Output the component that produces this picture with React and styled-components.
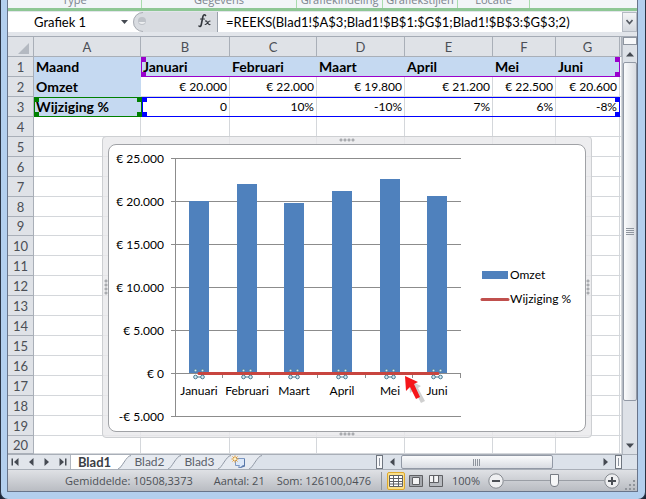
import { useState } from 'react';
import styled, { createGlobalStyle } from 'styled-components';

const GlobalStyle = createGlobalStyle`
  * {
    box-sizing: border-box;
  }

  body {
    margin: 0;
    background-color: #1d2638;
    font-family: Lato, 'Liberation Sans', sans-serif;
    font-size: 13px;
    color: #000000;
  }

  button,
  input {
    margin: 0;
    padding: 0;
    border: none;
    outline: none;
    background: none;
    font: inherit;
    color: inherit;
  }
`;

const columns = [
  { name: 'A', width: 107 },
  { name: 'B', width: 89 },
  { name: 'C', width: 87 },
  { name: 'D', width: 88 },
  { name: 'E', width: 88 },
  { name: 'F', width: 63 },
  { name: 'G', width: 64 },
];

const rows = [
  ['Maand', 'Januari', 'Februari', 'Maart', 'April', 'Mei', 'Juni'],
  ['Omzet', '€ 20.000', '€ 22.000', '€ 19.800', '€ 21.200', '€ 22.500', '€ 20.600'],
  ['Wijziging %', '0', '10%', '-10%', '7%', '6%', '-8%'],
];

const rowHeights = [20, 20, 20, 20, 20, 20, 20, 20, 19, 20, 20, 20, 20, 20, 20, 20, 20, 20, 20, 18];

const months = rows[0].slice(1);
const revenue = [20000, 22000, 19800, 21200, 22500, 20600];

const groups = [
  { name: 'Type', width: 134 },
  { name: 'Gegevens', width: 155 },
  { name: 'Grafiekindeling', width: 86 },
  { name: 'Grafiekstijlen', width: 75 },
  { name: 'Locatie', width: 72 },
];

const Window = styled.main`
  padding: 0 7px 7px 6px;
  background-color: #b3cfee;
  border: 1px solid #2a3344;
  border-top: none;
  border-radius: 0 0 8px 8px;
  overflow: hidden;
`;

const Content = styled.div`
  border: 1px solid #68748a;
  border-top: none;
  background-color: #e4e8ed;
`;

const Ribbon = styled.div`
  display: flex;
  height: 11px;
  overflow: hidden;
  background-color: #f2f5f8;
  border-bottom: 3px solid #8ec795;
`;

const Group = styled.div`
  flex: none;
  display: flex;
  align-items: flex-end;
  justify-content: center;
  width: ${({ $width }) => $width}px;
  height: 8px;
  border-right: 1px solid #a9dcae;
  font-family: 'Open Sans', sans-serif;
  font-size: 11px;
  line-height: 16px;
  color: #7b838d;
  white-space: nowrap;
`;

const FormulaBar = styled.div`
  display: flex;
  height: 26px;
  padding: 1px 0 4px;
  background-color: #e2e5ea;
  border-bottom: 1px solid #a5abb5;

  .name {
    width: 107px;
    padding-left: 26px;
    background-color: #ffffff;
  }

  .drop {
    display: flex;
    align-items: center;
    justify-content: center;
    width: 18px;
    background-color: #ffffff;
  }

  .formula {
    flex: 1;
    min-width: 0;
    padding-left: 8px;
    background-color: #ffffff;
    border-left: 1px solid #9aa1ab;
  }

  .expand {
    display: flex;
    align-items: center;
    justify-content: center;
    width: 15px;
    background: linear-gradient(#f3f4f6, #d5d9df);
    border: 1px solid #b5bac3;
  }
`;

const FunctionArea = styled.div`
  display: flex;
  align-items: center;
  justify-content: space-between;
  width: 84px;
  padding-right: 6px;
  background-color: #d9dce1;
`;

const Workspace = styled.div`
  display: flex;
`;

const Sheet = styled.div`
  position: relative;
  flex: 1;
  min-width: 0;
  overflow: hidden;
  background-color: #ffffff;
`;

const Grid = styled.table`
  width: 100%;
  table-layout: fixed;
  border-collapse: separate;
  border-spacing: 0;
  line-height: 16px;

  th,
  td {
    padding: 0;
    overflow: hidden;
    white-space: nowrap;
    border-right: 1px solid #d4d7db;
    border-bottom: 1px solid #d4d7db;
  }
`;

const HeadCell = styled.th`
  height: 20px;
  font-weight: normal;
  color: #4b4f56;
  text-align: center;
  background-color: #dfe2e7;
  &&& {
    border-color: #a9afb8;
  }

  svg {
    display: block;
    margin: 4px 0 0 10px;
  }
`;

const RowHead = styled(HeadCell)`
  height: auto;
`;

const Row = styled.tr`
  height: ${({ $height }) => $height}px;
`;

const Cell = styled.td`
  text-align: ${({ $text }) => ($text ? 'left' : 'right')};
  font-size: ${({ $text }) => ($text ? 14 : 12)}px;
  font-weight: ${({ $text }) => ($text ? 'bold' : 'normal')};
  background-color: ${({ $filled }) => ($filled ? '#c5d9f1' : '#ffffff')};
  &&& {
    padding: 0 2px;
    ${({ $filled }) => $filled && 'border-color: #c5d9f1;'}
  }
`;

const Range = styled.div`
  position: absolute;
  left: ${({ $left }) => $left}px;
  top: ${({ $top }) => $top}px;
  width: ${({ $width }) => $width}px;
  height: 20px;
  border: 1px solid ${({ $color }) => $color};
  ${({ $open }) => $open && 'border-top-color: transparent;'}

  i {
    position: absolute;
    width: 5px;
    height: 5px;
    background-color: ${({ $color }) => $color};
  }

  i:nth-child(odd) {
    left: -1px;
  }

  i:nth-child(even) {
    right: -1px;
  }

  i:nth-child(-n + 2) {
    top: -1px;
  }

  i:nth-child(n + 3) {
    bottom: -1px;
  }
`;

const ChartFrame = styled.figure`
  position: absolute;
  left: 94px;
  top: 99px;
  margin: 0;
  padding: 7px 5px 5px;
  background-color: rgba(232, 233, 235, 0.8);
  border: 1px solid #cdcfd2;
  border-radius: 4px;

  > svg {
    display: block;
  }
`;

const ChartArea = styled.svg`
  background-color: #ffffff;
  border: 1px solid #a0a2a6;
  border-radius: 8px;
  font-size: 12px;
  overflow: hidden;
`;

const Grip = styled.span`
  position: absolute;
  ${({ $side }) => $side}: 1px;
  ${({ $side }) =>
    $side === 'top' || $side === 'bottom'
      ? 'left: 50%; margin-left: -8px; width: 16px; height: 4px;'
      : 'top: 50%; margin-top: -8px; width: 4px; height: 16px;'}
  background: radial-gradient(#a9abaf 1px, transparent 2px) 0 0 / 4px 4px;
`;

const VerticalBar = styled.div`
  flex: none;
  display: flex;
  flex-direction: column;
  width: 15px;
  background-color: #dde1e7;
  border-left: 1px solid #b4bac3;

  .split {
    height: 8px;
    background-color: #f7f8fa;
    border: 1px solid #8d949f;
  }

  .thumb {
    flex: 1;
    display: flex;
    align-items: center;
    justify-content: center;
    margin-bottom: 36px;
    background: linear-gradient(90deg, #fafbfc, #d9dce2);
    border: 1px solid #9299a5;
    border-radius: 2px;
  }
`;

const ScrollButton = styled.button`
  flex: none;
  display: flex;
  align-items: center;
  justify-content: center;
  width: ${({ $wide }) => $wide || 14}px;
  height: ${({ $tall }) => $tall || 14}px;
`;

const TabStrip = styled.div`
  display: flex;
  height: 16px;
  background-color: #dce2ea;
  border-top: 1px solid #a9afb8;
  border-bottom: 1px solid #a9afb8;
`;

const SheetNav = styled.div`
  display: flex;
  justify-content: space-around;
  width: 63px;
  background-color: #e1e5eb;
  border-right: 1px solid #b0b6bf;
`;

const Tab = styled.button`
  width: ${({ $active }) => ($active ? 47 : 37)}px;
  font-size: ${({ $active }) => ($active ? 13 : 12)}px;
  line-height: 14px;
  font-weight: ${({ $active }) => ($active ? 'bold' : 'normal')};
  color: ${({ $active }) => ($active ? '#3a3e45' : '#5a6069')};
  background-color: ${({ $active }) => ($active ? '#ffffff' : '#e6eaf0')};
  white-space: nowrap;
`;

const NewTab = styled.button`
  width: 18px;
  background-color: #e6eaf0;

  svg {
    display: block;
  }
`;

const HorizontalBar = styled.div`
  display: flex;
  width: 261px;
  margin-left: auto;

  .split {
    width: 7px;
    padding: 2px;
    background-color: #f7f8fa;
    border: 1px solid #6f7680;
  }

  .split::after {
    content: '';
    display: block;
    width: 1px;
    height: 8px;
    margin: auto;
    background-color: #8d949f;
  }

  .thumb {
    display: flex;
    align-items: center;
    justify-content: center;
    width: 152px;
    margin-right: auto;
    background: linear-gradient(#fafbfc, #d9dce2);
    border: 1px solid #9299a5;
    border-radius: 2px;
  }

  .corner {
    width: 15px;
  }
`;

const StatusBar = styled.footer`
  display: flex;
  align-items: center;
  justify-content: flex-end;
  height: 21px;
  background: linear-gradient(#dfe1e5, #b9bcc2);
  font-family: 'Open Sans', sans-serif;
  font-size: 11px;
  line-height: 16px;
  color: #4c5056;
`;

const Stat = styled.span`
  margin-right: ${({ $gap }) => $gap}px;
  white-space: nowrap;
`;

const ViewButton = styled.button`
  display: flex;
  align-items: center;
  justify-content: center;
  width: 18px;
  height: 18px;
  border-radius: 2px;
  background-color: ${({ $active }) => ($active ? '#fbe08a' : 'transparent')};
  border: 1px solid ${({ $active }) => ($active ? '#dfa92c' : 'transparent')};
`;

const Views = styled.div`
  display: flex;
  gap: 2px;
  padding-left: 5px;
  border-left: 1px solid #8e939b;
`;

const Zoom = styled.div`
  display: flex;
  align-items: center;
  margin-left: 7px;

  button {
    display: flex;
    width: 16px;
    height: 16px;
  }

  .level {
    width: 35px;
    margin-right: 1px;
  }

  input {
    appearance: none;
    width: 100px;
    height: 16px;
    background: linear-gradient(#9a9ea5, #9a9ea5) center / 100% 1px no-repeat;
  }

  input::-webkit-slider-thumb {
    appearance: none;
    width: 9px;
    height: 13px;
    background-color: #f6f7f8;
    border: 1px solid #777c84;
    border-radius: 1px 1px 5px 5px;
  }
`;

const ResizeGrip = styled.svg`
  margin-left: 5px;
  align-self: flex-end;
`;

const Arrow = ({ dir, bar }) => {
  const turn = { up: 0, right: 90, down: 180, left: 270 }[dir];
  return (
    <svg width="10" height="10" viewBox="0 0 10 10" aria-hidden="true">
      <g transform={`rotate(${turn} 5 5)`} fill="#454a52">
        <path d="M1 7.5L5 3l4 4.5z" />
        {bar && <path d="M1.5 0.5h7V2h-7z" />}
      </g>
    </svg>
  );
};

const Slant = ({ left, right }) => (
  <svg width="13" height="14" viewBox="0 0 13 14" aria-hidden="true">
    <path d="M0 0h13L0 14z" fill={left} />
    <path d="M13 0v14H0z" fill={right} />
    <path d="M0 14C4 13 8 1 13 0.5" fill="none" stroke="#929aa6" />
  </svg>
);

const Selection = props => (
  <Range {...props}>
    <i />
    <i />
    <i />
    <i />
  </Range>
);

const plot = { left: 66, right: 352, top: 13, step: 43, zero: 228 };
const slot = (plot.right - plot.left) / months.length;

const Chart = () => (
  <ChartFrame aria-label="Grafiek 1">
    <ChartArea width="478" height="288" viewBox="0 0 476 286">
      {['€ 25.000', '€ 20.000', '€ 15.000', '€ 10.000', '€ 5.000', '€ 0', '-€ 5.000'].map(
        (label, i) => {
          const y = plot.top + i * plot.step;
          return (
            <g key={label}>
              <path d={`M${plot.left - 4} ${y + 0.5}H${plot.right}`} stroke="#8c8c8c" />
              <text x="55" y={y + 5} textAnchor="end">
                {label}
              </text>
            </g>
          );
        }
      )}
      <path d="M66.5 13V271" stroke="#8c8c8c" />
      {months.map((month, i) => {
        const middle = Math.round(plot.left + slot * (i + 0.5));
        const height = Math.round((revenue[i] / 5000) * plot.step);
        const tick = Math.round(plot.left + slot * (i + 1)) - 0.5;
        return (
          <g key={month}>
            <rect x={middle - 10} y={plot.zero - height} width="20" height={height} fill="#4f81bd" />
            <path d={`M${tick} 228v5`} stroke="#8c8c8c" />
            <text x={middle} y="250" textAnchor="middle">
              {month}
            </text>
          </g>
        );
      })}
      <path d="M90 228.5H329" stroke="#c8453f" strokeWidth="3" strokeLinecap="round" />
      {months.map((month, i) => {
        const middle = Math.round(plot.left + slot * (i + 0.5));
        return (
          <g key={month} fill="#d8ecf4" stroke="#47788f">
            <circle cx={middle - 3.5} cy="225.5" r="1.3" strokeWidth="0.7" />
            <circle cx={middle + 3.5} cy="225.5" r="1.3" strokeWidth="0.7" />
            <path d={`M${middle - 3} 232h6`} />
            <circle cx={middle - 3.5} cy="232" r="1.8" />
            <circle cx={middle + 3.5} cy="232" r="1.8" />
          </g>
        );
      })}
      <rect x="373" y="126" width="26" height="8" fill="#4f81bd" />
      <text x="401" y="134">
        Omzet
      </text>
      <path d="M373 154.5h26" stroke="#c0504d" strokeWidth="3" strokeLinecap="round" />
      <text x="401" y="158">
        Wijziging %
      </text>
      <path d="M300 235l12 6-3 2 7 13-4 2-7-13-4 3z" fill="#777777" opacity="0.35" />
      <path d="M296 231l13 6-4 2 6 13-4 2-6-12-4 4z" fill="#f5161a" />
    </ChartArea>
    <Grip $side="top" />
    <Grip $side="right" />
    <Grip $side="bottom" />
    <Grip $side="left" />
  </ChartFrame>
);

const App = () => {
  const [name, setName] = useState('Grafiek 1');
  const [formula, setFormula] = useState('=REEKS(Blad1!$A$3;Blad1!$B$1:$G$1;Blad1!$B$3:$G$3;2)');
  const [zoom, setZoom] = useState(100);

  return (
    <>
      <GlobalStyle />
      <Window>
        <Content>
          <Ribbon>
            {groups.map(group => (
              <Group key={group.name} $width={group.width}>
                {group.name}
              </Group>
            ))}
          </Ribbon>

          <FormulaBar>
            <input
              className="name"
              aria-label="Naamvak"
              value={name}
              onChange={e => setName(e.target.value)}
            />
            <button className="drop" aria-label="Namen">
              <svg width="7" height="4" viewBox="0 0 7 4">
                <path d="M0 0h7L3.5 4z" fill="#454a52" />
              </svg>
            </button>
            <FunctionArea>
              <svg width="16" height="20" viewBox="0 0 16 20" aria-hidden="true">
                <path d="M0 0h10A10 10 0 0 0 10 20H0z" fill="#ffffff" />
                <path d="M10 0.5A9.5 9.5 0 0 0 10 19.5" fill="none" stroke="#a9adb4" />
                <circle cx="9" cy="9" r="4" fill="#bfc3c9" />
                <path d="M5.5 10a4 4 0 0 0 7 0z" fill="#eceef0" />
              </svg>
              <button aria-label="Functie invoegen">
                <svg width="13" height="15" viewBox="0 0 13 15">
                  <g fill="none" stroke="#32363c" strokeLinecap="round">
                    <path
                      d="M7.5 2.5C6.5 1 5.2 1.8 4.8 4L3.3 11.5C3 13.3 2 14 1 13"
                      strokeWidth="1.6"
                    />
                    <path
                      d="M2.5 6h4M7.5 8c1.8-1 2 4.5 4.5 3.5M12 8c-1.8 0-2.8 3.7-4.8 3.5"
                      strokeWidth="1.2"
                    />
                  </g>
                </svg>
              </button>
            </FunctionArea>
            <input
              className="formula"
              aria-label="Formulebalk"
              value={formula}
              onChange={e => setFormula(e.target.value)}
            />
            <button className="expand" aria-label="Formulebalk uitvouwen">
              <svg width="7" height="6" viewBox="0 0 7 6">
                <path d="M0.5 1l3 3.5 3-3.5" fill="none" stroke="#555a62" strokeWidth="1.6" />
              </svg>
            </button>
          </FormulaBar>

          <Workspace>
            <Sheet>
              <Grid>
                <colgroup>
                  <col style={{ width: 26 }} />
                  {columns.map(column => (
                    <col key={column.name} style={{ width: column.width }} />
                  ))}
                  <col />
                </colgroup>
                <thead>
                  <tr>
                    <HeadCell aria-label="Alles selecteren">
                      <svg width="11" height="11" viewBox="0 0 11 11">
                        <path d="M11 0v11H0z" fill="#b4b9c1" />
                      </svg>
                    </HeadCell>
                    {columns.map(column => (
                      <HeadCell key={column.name} scope="col">
                        {column.name}
                      </HeadCell>
                    ))}
                    <HeadCell />
                  </tr>
                </thead>
                <tbody>
                  {rowHeights.map((height, i) => (
                    <Row key={i} $height={height}>
                      <RowHead scope="row">{i + 1}</RowHead>
                      {columns.map((column, j) => (
                        <Cell
                          key={column.name}
                          $text={i === 0 || j === 0}
                          $filled={i === 0 || (j === 0 && i < 3)}
                        >
                          {rows[i]?.[j]}
                        </Cell>
                      ))}
                      <td />
                    </Row>
                  ))}
                </tbody>
              </Grid>
              <Selection $left={133} $top={20} $width={479} $color="#9a00cd" $open />
              <Selection $left={134} $top={60} $width={478} $color="#0000ff" />
              <Selection $left={26} $top={60} $width={108} $color="#008000" />
              <Chart />
            </Sheet>
            <VerticalBar>
              <div className="split" />
              <ScrollButton aria-label="Omhoog" $tall={17}>
                <Arrow dir="up" />
              </ScrollButton>
              <div className="thumb">
                <svg width="8" height="7" viewBox="0 0 8 7">
                  <path d="M0 0.5h8M0 2.5h8M0 4.5h8M0 6.5h8" stroke="#8f959e" />
                </svg>
              </div>
              <ScrollButton aria-label="Omlaag" $tall={17}>
                <Arrow dir="down" />
              </ScrollButton>
            </VerticalBar>
          </Workspace>

          <TabStrip>
            <SheetNav>
              <ScrollButton aria-label="Eerste blad">
                <Arrow dir="left" bar />
              </ScrollButton>
              <ScrollButton aria-label="Vorig blad">
                <Arrow dir="left" />
              </ScrollButton>
              <ScrollButton aria-label="Volgend blad">
                <Arrow dir="right" />
              </ScrollButton>
              <ScrollButton aria-label="Laatste blad">
                <Arrow dir="right" bar />
              </ScrollButton>
            </SheetNav>
            <Tab $active>Blad1</Tab>
            <Slant left="#ffffff" right="#e6eaf0" />
            <Tab>Blad2</Tab>
            <Slant left="#e6eaf0" right="#e6eaf0" />
            <Tab>Blad3</Tab>
            <Slant left="#e6eaf0" right="#e6eaf0" />
            <NewTab aria-label="Blad invoegen">
              <svg width="18" height="14" viewBox="0 0 18 14">
                <path d="M4.5 3.5h9v7h-2l-1 2h-3l1-2h-4z" fill="#dce8f8" stroke="#7d98c4" />
                <path d="M8 12.5l5-2v-7l1 1v7l-3 1z" fill="#5877a8" />
                <path d="M4 0.5v7M0.5 4h7M1.5 1.5l5 5M6.5 1.5l-5 5" stroke="#e49a2c" />
                <circle cx="4" cy="4" r="1.3" fill="#fff3c4" />
              </svg>
            </NewTab>
            <Slant left="#e6eaf0" right="#dce2ea" />
            <HorizontalBar>
              <div className="split" />
              <ScrollButton aria-label="Naar links" $wide={18}>
                <Arrow dir="left" />
              </ScrollButton>
              <div className="thumb">
                <svg width="8" height="7" viewBox="0 0 8 7">
                  <path d="M0.5 0v7M2.5 0v7M4.5 0v7M6.5 0v7" stroke="#8f959e" />
                </svg>
              </div>
              <ScrollButton aria-label="Naar rechts" $wide={18}>
                <Arrow dir="right" />
              </ScrollButton>
              <div className="split" />
              <div className="corner" />
            </HorizontalBar>
          </TabStrip>

          <StatusBar>
            <Stat $gap={21}>Gemiddelde: 10508,3373</Stat>
            <Stat $gap={12}>Aantal: 21</Stat>
            <Stat $gap={10}>Som: 126100,0476</Stat>
            <Views>
              <ViewButton $active aria-label="Normaal">
                <svg width="14" height="12" viewBox="0 0 14 12">
                  <path
                    d="M0.5 0.5h13v11h-13zM0.5 3.5h13M0.5 6.5h13M0.5 9h13M4.5 0.5v11M9.5 0.5v11"
                    fill="#ffffff"
                    stroke="#5f6064"
                  />
                </svg>
              </ViewButton>
              <ViewButton aria-label="Pagina-indeling">
                <svg width="14" height="12" viewBox="0 0 14 12">
                  <path d="M0.5 0.5h13v11h-13z" fill="#a5a8ad" stroke="#5f6064" />
                  <path d="M3.5 2.5h7v7h-7z" fill="#f4f4f5" stroke="#5f6064" />
                </svg>
              </ViewButton>
              <ViewButton aria-label="Pagina-eindevoorbeeld">
                <svg width="14" height="12" viewBox="0 0 14 12">
                  <path d="M0.5 0.5h13v11h-13z" fill="#b7babf" stroke="#5f6064" />
                  <path d="M1 1h3v6H1zM5.5 1H9v6H5.5z" fill="#f4f4f5" />
                  <path d="M1 7.5h8.5V1M4.5 1v6" fill="none" stroke="#5f6064" />
                </svg>
              </ViewButton>
            </Views>
            <Zoom>
              <button className="level">{zoom}%</button>
              <button aria-label="Uitzoomen" onClick={() => setZoom(zoom - 10)}>
                <svg width="16" height="16" viewBox="0 0 16 16">
                  <circle cx="8" cy="8" r="7.2" fill="#eeeff1" stroke="#85898f" />
                  <path d="M4 8h8" stroke="#4c5056" strokeWidth="2" />
                </svg>
              </button>
              <input
                type="range"
                aria-label="In- en uitzoomen"
                min="0"
                max="200"
                value={zoom}
                onChange={e => setZoom(Number(e.target.value))}
              />
              <button aria-label="Inzoomen" onClick={() => setZoom(zoom + 10)}>
                <svg width="16" height="16" viewBox="0 0 16 16">
                  <circle cx="8" cy="8" r="7.2" fill="#eeeff1" stroke="#85898f" />
                  <path d="M4 8h8M8 4v8" stroke="#4c5056" strokeWidth="2" />
                </svg>
              </button>
            </Zoom>
            <ResizeGrip width="12" height="12" viewBox="0 0 12 12" aria-hidden="true">
              <path
                d="M8 1h2v2H8zM8 5h2v2H8zM8 9h2v2H8zM4 5h2v2H4zM4 9h2v2H4zM0 9h2v2H0z"
                fill="#90949b"
              />
            </ResizeGrip>
          </StatusBar>
        </Content>
      </Window>
    </>
  );
};

export default App;
